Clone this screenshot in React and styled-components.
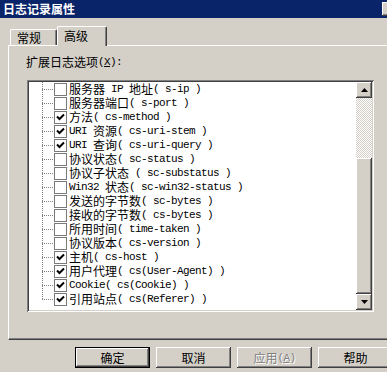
import styled, { createGlobalStyle } from "styled-components";

const GlobalStyle = createGlobalStyle`
  html, body {
    margin: 0;
    padding: 0;
    background: #d4d0c8;
    overflow: hidden;
  }
  body {
    font-family: "Noto Sans CJK SC", "Liberation Sans", sans-serif;
    font-size: 12px;
    color: #000;
  }
`;

const options = [
  { label: "服务器 IP 地址( s-ip )", on: false },
  { label: "服务器端口( s-port )", on: false },
  { label: "方法( cs-method )", on: true },
  { label: "URI 资源( cs-uri-stem )", on: true },
  { label: "URI 查询( cs-uri-query )", on: true },
  { label: "协议状态( sc-status )", on: false },
  { label: "协议子状态 ( sc-substatus )", on: false },
  { label: "Win32 状态( sc-win32-status )", on: false },
  { label: "发送的字节数( sc-bytes )", on: false },
  { label: "接收的字节数( cs-bytes )", on: false },
  { label: "所用时间( time-taken )", on: false },
  { label: "协议版本( cs-version )", on: false },
  { label: "主机( cs-host )", on: true },
  { label: "用户代理( cs(User-Agent) )", on: true },
  { label: "Cookie( cs(Cookie) )", on: true },
  { label: "引用站点( cs(Referer) )", on: true },
];

const raised = `
  box-shadow: inset -1px -1px #404040, inset 1px 1px #ffffff,
    inset -2px -2px #808080, inset 2px 2px #d4d0c8;
`;

// split a label into han / latin runs so the latin keeps a fixed 6px pitch
const Label = ({ text }) =>
  text
    .split(/([\u4e00-\u9fff]+)/)
    .filter(Boolean)
    .map((part, i) =>
      /[\u4e00-\u9fff]/.test(part) ? (
        <Han key={i}>{part}</Han>
      ) : (
        <Latin key={i}>{part}</Latin>
      )
    );

const App = () => {
  return (
    <Window>
      <GlobalStyle />
      <TitleBar>
        <Title>日志记录属性</Title>
        <CloseButton />
      </TitleBar>

      <Body>
        <TabRow>
          <Tab>常规</Tab>
          <Tab $active>高级</Tab>
        </TabRow>

        <Panel>
          <FieldLabel>
            <Han>扩展日志选项</Han>
            <Latin>
              (<u>X</u>):
            </Latin>
          </FieldLabel>

          <ListBox>
            <Tree>
              {options.map((opt, i) => (
                <Row key={opt.label}>
                  <Connector $last={i === options.length - 1} />
                  <Check>
                    {opt.on && (
                      <svg width="9" height="9" viewBox="0 0 9 9">
                        <path
                          d="M1 3.5 L3.5 6 L8 1.5"
                          fill="none"
                          stroke="#000"
                          strokeWidth="2"
                        />
                      </svg>
                    )}
                  </Check>
                  <RowText>
                    <Label text={opt.label} />
                  </RowText>
                </Row>
              ))}
            </Tree>
            <ScrollBar>
              <ArrowButton>
                <svg width="7" height="4" viewBox="0 0 7 4">
                  <path d="M3.5 0 L7 4 L0 4 Z" fill="#000" />
                </svg>
              </ArrowButton>
              <Track>
                <Thumb />
              </Track>
              <ArrowButton>
                <svg width="7" height="4" viewBox="0 0 7 4">
                  <path d="M0 0 L7 0 L3.5 4 Z" fill="#000" />
                </svg>
              </ArrowButton>
            </ScrollBar>
          </ListBox>
        </Panel>

        <ButtonRow>
          <Button $default>确定</Button>
          <Button>取消</Button>
          <Button $disabled>
            <Han>应用</Han>
            <Latin>
              (<u>A</u>)
            </Latin>
          </Button>
          <Button>帮助</Button>
        </ButtonRow>
      </Body>
    </Window>
  );
};

export default App;

//Styled components
const Window = styled.div`
  width: 400px;
  height: 372px;
  display: flex;
  flex-direction: column;
`;

const TitleBar = styled.div`
  height: 18px;
  background: #0a246a;
  display: flex;
  align-items: center;
  justify-content: space-between;
  padding: 0 2px 0 3px;
`;

const Title = styled.span`
  color: #ffffff;
  font-weight: bold;
  font-size: 12px;
  line-height: 18px;
`;

const CloseButton = styled.span`
  width: 16px;
  height: 14px;
  background: #d4d0c8;
  ${raised}
`;

const Body = styled.div`
  display: flex;
  flex-direction: column;
  padding: 8px 0 0 8px;
`;

const TabRow = styled.div`
  display: flex;
  align-items: flex-end;
  padding-left: 2px;
  height: 20px;
  margin-bottom: -1px;
  position: relative;
  z-index: 1;
`;

const Tab = styled.div`
  width: ${(p) => (p.$active ? 50 : 47)}px;
  height: ${(p) => (p.$active ? 20 : 16)}px;
  margin-bottom: ${(p) => (p.$active ? 0 : 1)}px;
  box-sizing: border-box;
  background: #d4d0c8;
  border-top: 1px solid #ffffff;
  border-left: 1px solid #ffffff;
  border-right: 1px solid #404040;
  border-radius: 2px 2px 0 0;
  box-shadow: inset -1px 0 #808080;
  padding-left: 6px;
  padding-top: ${(p) => (p.$active ? 1 : 0)}px;
  line-height: 15px;
  font-size: 12px;
`;

const Panel = styled.div`
  width: 384px;
  box-sizing: border-box;
  border-top: 1px solid #ffffff;
  border-left: 1px solid #ffffff;
  border-right: 1px solid #404040;
  border-bottom: 1px solid #404040;
  box-shadow: inset -1px -1px #808080;
  padding: 9px 0 27px 17px;
  display: flex;
  flex-direction: column;
`;

const FieldLabel = styled.div`
  height: 14px;
  display: flex;
  align-items: center;
`;

const Han = styled.span`
  display: inline-block;
  height: 14px;
  line-height: 14px;
  vertical-align: top;
  font-family: "Noto Sans CJK SC", sans-serif;
  font-size: 12px;
`;

const Latin = styled.span`
  display: inline-block;
  height: 14px;
  line-height: 14px;
  vertical-align: top;
  font-family: "Liberation Mono", "DejaVu Sans Mono", monospace;
  font-size: 11px;
  letter-spacing: -0.6px;
  white-space: pre;
`;

const ListBox = styled.div`
  margin-top: 11px;
  margin-left: 1px;
  width: 347px;
  height: 232px;
  box-sizing: border-box;
  padding: 2px;
  background: #ffffff;
  box-shadow: inset 1px 1px #808080, inset -1px -1px #ffffff,
    inset 2px 2px #404040, inset -2px -2px #d4d0c8;
  display: flex;
`;

const Tree = styled.div`
  flex: 1;
  display: flex;
  flex-direction: column;
`;

const Row = styled.div`
  height: 14px;
  display: flex;
  align-items: center;
`;

const Connector = styled.span`
  width: 12px;
  height: 14px;
  margin-left: 13px;
  flex-shrink: 0;
  background: repeating-linear-gradient(
        to right,
        #808080 0 1px,
        transparent 1px 2px
      )
      0 7px / 100% 1px no-repeat,
    repeating-linear-gradient(to bottom, #808080 0 1px, transparent 1px 2px)
      0 0 / 1px ${(p) => (p.$last ? "8px" : "100%")} no-repeat;
`;

const Check = styled.span`
  width: 13px;
  height: 13px;
  box-sizing: border-box;
  border: 1px solid #7a7a7a;
  background: #ffffff;
  display: flex;
  align-items: center;
  justify-content: center;
  flex-shrink: 0;
`;

const RowText = styled.span`
  margin-left: 2px;
  height: 14px;
  display: flex;
  white-space: pre;
`;

const ScrollBar = styled.div`
  width: 16px;
  display: flex;
  flex-direction: column;
`;

const ArrowButton = styled.div`
  height: 16px;
  background: #d4d0c8;
  ${raised}
  display: flex;
  align-items: center;
  justify-content: center;
`;

const Track = styled.div`
  flex: 1;
  display: flex;
  flex-direction: column;
  justify-content: flex-end;
  background: repeating-conic-gradient(#ffffff 0 25%, #d4d0c8 0 50%) 0 0 / 2px
    2px;
`;

const Thumb = styled.div`
  height: 136px;
  background: #d4d0c8;
  ${raised}
`;

const ButtonRow = styled.div`
  display: flex;
  justify-content: flex-end;
  gap: 6px;
  margin-top: 7px;
  padding-right: 7px;
`;

const Button = styled.div`
  width: 75px;
  height: 21px;
  box-sizing: border-box;
  background: #d4d0c8;
  display: flex;
  align-items: center;
  justify-content: center;
  font-size: 12px;
  ${raised}
  ${(p) =>
    p.$default &&
    `
    border: 1px solid #000;
    box-shadow: inset -1px -1px #404040, inset 1px 1px #ffffff,
      inset -2px -2px #808080;
  `}
  color: ${(p) => (p.$disabled ? "#808080" : "#000")};
  text-shadow: ${(p) => (p.$disabled ? "1px 1px #ffffff" : "none")};
`;
